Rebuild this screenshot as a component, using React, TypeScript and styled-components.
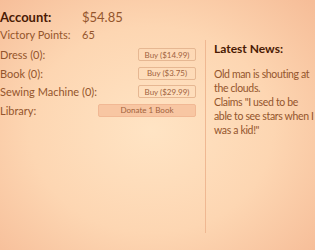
import styled, { createGlobalStyle } from 'styled-components'

const GlobalStyle = createGlobalStyle`
  html, body {
    margin: 0;
    padding: 0;
  }
  body {
    width: 315px;
    height: 250px;
    overflow: hidden;
    font-family: 'Lato', 'Open Sans', sans-serif;
    background: radial-gradient(ellipse 70% 75% at 48% 52%, #ffe4c4 0%, #fdd6b2 55%, #f6bd98 100%);
    color: #94552c;
  }
`

const Page = styled.div`
  display: flex;
  width: 315px;
  height: 250px;
  overflow: hidden;
`

const Shop = styled.div`
  width: 196px;
  flex-shrink: 0;
  padding: 8px 9px 0 0;
  display: flex;
  flex-direction: column;
`

const StatRow = styled.div<{ $strong?: boolean }>`
  display: grid;
  grid-template-columns: 82px 1fr;
  align-items: center;
  height: ${p => (p.$strong ? 18 : 16)}px;
  font-size: ${p => (p.$strong ? 13 : 11)}px;
  font-weight: ${p => (p.$strong ? 700 : 400)};
  color: ${p => (p.$strong ? '#4a1a04' : '#94552c')};
`

const Value = styled.span<{ $strong?: boolean }>`
  font-weight: 400;
  font-size: ${p => (p.$strong ? 13 : 11)}px;
  color: #94552c;
`

const Items = styled.div`
  display: flex;
  flex-direction: column;
  gap: 5px;
  margin-top: 6px;
`

const ItemRow = styled.div`
  display: flex;
  align-items: center;
  justify-content: space-between;
  height: 13.5px;
  font-size: 11px;
`

const Button = styled.button<{ $wide?: boolean; $filled?: boolean }>`
  width: ${p => (p.$wide ? 98 : 58)}px;
  height: 13px;
  padding: 0;
  font-family: inherit;
  font-size: 8px;
  color: #a0623c;
  background: ${p => (p.$filled ? '#f8c6a2' : 'transparent')};
  border: 1px solid ${p => (p.$filled ? '#f1b894' : '#e6b792')};
  border-radius: 2px;
  cursor: pointer;
`

const News = styled.div`
  margin-top: 40px;
  height: 193px;
  flex: 1;
  border-left: 1px solid #efb892;
  padding-left: 8px;
`

const Heading = styled.div`
  font-size: 12px;
  font-weight: 700;
  color: #4a1a04;
  margin-top: 1px;
  height: 14px;
`

const NewsText = styled.p`
  margin: 12px 0 0;
  font-size: 10.5px;
  line-height: 14px;
  letter-spacing: -0.35px;
  color: #94552c;
`

export default function App() {
  return (
    <>
      <GlobalStyle />
      <Page>
        <Shop>
          <StatRow $strong>
            <span>Account:</span>
            <Value $strong>$54.85</Value>
          </StatRow>
          <StatRow>
            <span>Victory Points:</span>
            <Value>65</Value>
          </StatRow>
          <Items>
            <ItemRow>
              <span>Dress (0):</span>
              <Button>Buy ($14.99)</Button>
            </ItemRow>
            <ItemRow>
              <span>Book (0):</span>
              <Button>Buy ($3.75)</Button>
            </ItemRow>
            <ItemRow>
              <span>Sewing Machine (0):</span>
              <Button>Buy ($29.99)</Button>
            </ItemRow>
            <ItemRow>
              <span>Library:</span>
              <Button $wide $filled>Donate 1 Book</Button>
            </ItemRow>
          </Items>
        </Shop>
        <News>
          <Heading>Latest News:</Heading>
          <NewsText>
            Old man is shouting at the clouds.
            <br />
            Claims "I used to be able to see stars when I was a kid!"
          </NewsText>
        </News>
      </Page>
    </>
  )
}
